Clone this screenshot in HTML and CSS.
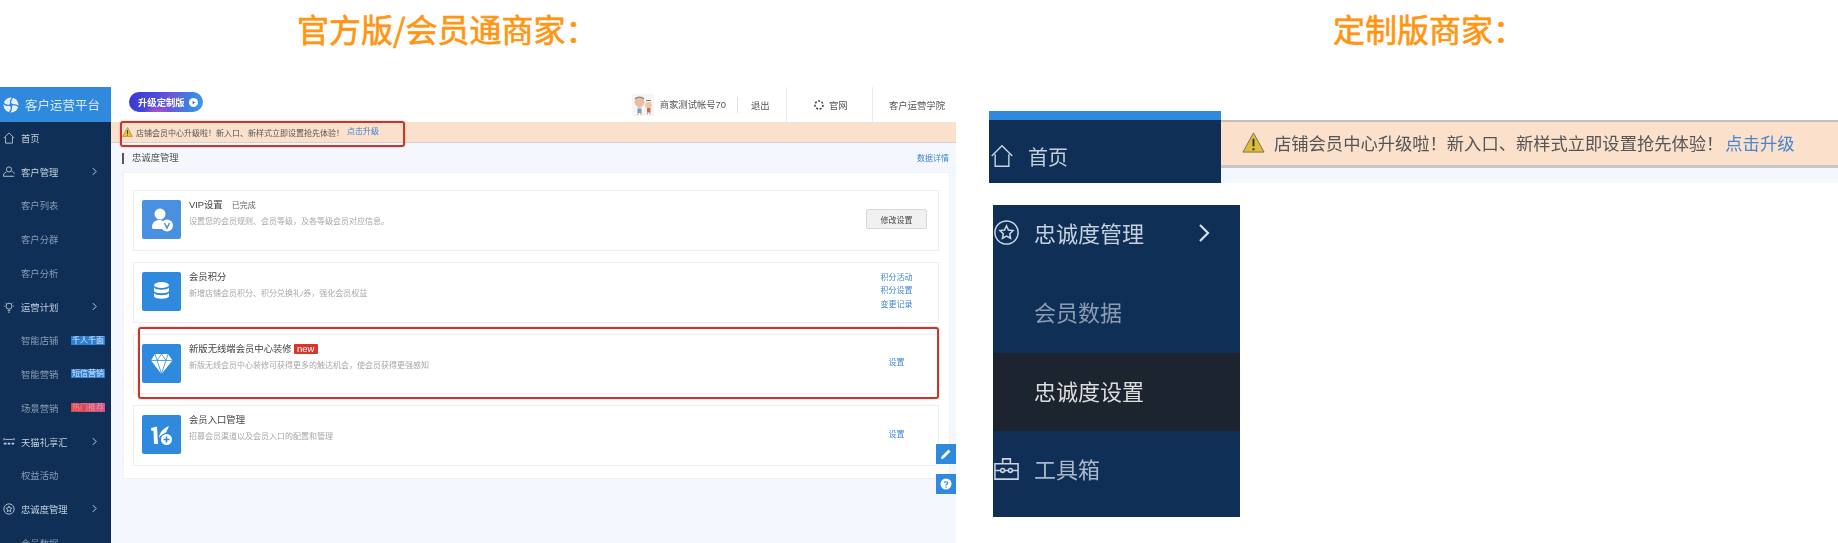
FILE: index.html
```html
<!DOCTYPE html>
<html lang="zh-CN">
<head>
<meta charset="utf-8">
<title>商家版本对比</title>
<link rel="stylesheet" href="styles.css">
</head>
<body>
<div class="page">
  <section class="col col-left">
    <h1 class="headline headline-left">官方版/会员通商家：</h1>
    <div class="shot">
      <aside class="side">
        <div class="brand">
          <svg class="brand-logo" viewBox="0 0 16 16"><circle cx="8" cy="8" r="7.500" fill="#e6eff9"/><g fill="none" stroke="#2f8ade" stroke-width="1.300"><path d="M8 8C7 5 7.500 2.500 10 0"/><path d="M8 8C11 7 13.500 7.500 16 10"/><path d="M8 8C9 11 8.500 13.500 6 16"/><path d="M8 8C5 9 2.500 8.500 0 6"/></g><circle cx="8" cy="8" r="1.800" fill="#2f8ade"/></svg>
          <span>客户运营平台</span>
        </div>
        <nav class="menu">
          <a class="row row-top"><svg class="ico" viewBox="0 0 14 14"><path d="M1 7l6-6 6 6M3 6v7h8V6"/></svg>首页</a>
          <a class="row row-top"><svg class="ico" viewBox="0 0 14 14"><circle cx="7" cy="4" r="3"/><path d="M4 7c-3 1-3.500 3-3.500 5h9M10 6c1 .5 3 1 3 3M9 12h4"/></svg>客户管理<svg class="chev" viewBox="0 0 6 10"><path d="M1 1l4 4-4 4"/></svg></a>
          <a class="row row-sub">客户列表</a>
          <a class="row row-sub">客户分群</a>
          <a class="row row-sub">客户分析</a>
          <a class="row row-top"><svg class="ico" viewBox="0 0 14 14"><circle cx="7" cy="6" r="3.500"/><path d="M5.500 11h3M6 13h2M1 6h1M12 6h1M2.500 2l1 1M11.500 2l-1 1"/></svg>运营计划<svg class="chev" viewBox="0 0 6 10"><path d="M1 1l4 4-4 4"/></svg></a>
          <a class="row row-sub">智能店铺<span class="tag tag-blue">千人千面</span></a>
          <a class="row row-sub">智能营销<span class="tag tag-blue">短信营销</span></a>
          <a class="row row-sub">场景营销<span class="tag tag-hot">热门推荐</span></a>
          <a class="row row-top"><svg class="ico" viewBox="0 0 14 14"><path d="M1 5V3l2 1h8l2-1v2" /><path class="thick" d="M1 9h3M5.500 9h3M10 9h3"/></svg>天猫礼享汇<svg class="chev" viewBox="0 0 6 10"><path d="M1 1l4 4-4 4"/></svg></a>
          <a class="row row-sub">权益活动</a>
          <a class="row row-top"><svg class="ico" viewBox="0 0 14 14"><circle cx="7" cy="7" r="6"/><path d="M7 3.500l1 2.200 2.400.3-1.700 1.600.4 2.400L7 8.900 4.900 10l.4-2.400L3.600 6l2.400-.3z"/></svg>忠诚度管理<svg class="chev" viewBox="0 0 6 10"><path d="M1 1l4 4-4 4"/></svg></a>
          <a class="row row-sub">会员数据</a>
        </nav>
      </aside>
      <div class="work">
        <header class="bar">
          <span class="upgrade">升级定制版<svg class="upgrade-ico" viewBox="0 0 10 10"><circle cx="5" cy="5" r="5" fill="#fff"/><path d="M4 3l3 2-3 2z" fill="#3c63d8"/></svg></span>
          <div class="bar-right">
            <svg class="avatar" viewBox="0 0 22 22"><rect width="22" height="22" fill="#f8f6f3"/><circle cx="7.500" cy="8" r="5" fill="#e6bfa6"/><path d="M3 5c2-2.500 7-2.500 9 0" fill="none" stroke="#8a8a80" stroke-width="1.300"/><rect x="5.500" y="13" width="4" height="3" fill="#e6bfa6"/><rect x="5.500" y="15" width="4" height="4" fill="#6a9fd0"/><path d="M6 19v2M9 19v2" stroke="#b9a48e"/><circle cx="16.500" cy="11" r="3.300" fill="#eec5aa"/><rect x="15" y="14" width="3.500" height="4.500" fill="#d8625a"/><path d="M14 6.500h5" stroke="#777"/><path d="M15.500 18.500v2M18 18.500v2" stroke="#b9a48e"/></svg>
            <span class="user">商家测试帐号70</span>
            <span class="logout">退出</span>
            <span class="site"><svg class="site-ico" viewBox="0 0 10 10"><circle cx="5" cy="5" r="4" fill="none" stroke="#444" stroke-width="1.600" stroke-dasharray="2 1.500"/></svg>官网</span>
            <span class="school">客户运营学院</span>
          </div>
        </header>
        <div class="notice">
          <svg class="warn" viewBox="0 0 12 11"><path d="M6 .5L11.500 10.500H.5z" fill="#ecc13c" stroke="#8a7a4a" stroke-width=".6"/><path d="M6 3.500v4M6 8.500v1" stroke="#333" stroke-width="1"/></svg>
          <span>店铺会员中心升级啦！新入口、新样式立即设置抢先体验！</span><a class="link notice-link">点击升级</a>
        </div>
        <div class="title-row">
          <h2 class="page-title">忠诚度管理</h2>
          <a class="link">数据详情</a>
        </div>
        <div class="panel">
          <article class="card">
            <span class="tile tile-vip"><svg class="glyph" viewBox="0 0 39 39"><circle cx="18" cy="14" r="5.500" fill="#fff"/><path d="M10 28c0-6 3-8 8-8 2 0 3 1 4 2-2 2-2 4-1 7H11z" fill="#fff"/><circle cx="25" cy="25.500" r="6" fill="#fff"/><path d="M22.500 23l2.500 5 2.500-5" fill="none" stroke="#4a90e0" stroke-width="1.500"/></svg></span>
            <div class="info">
              <h3 class="card-title">VIP设置<span class="done">已完成</span></h3>
              <p class="desc">设置您的会员规则、会员等级，及各等级会员对应信息。</p>
            </div>
            <div class="action"><button class="btn">修改设置</button></div>
          </article>
          <article class="card">
            <span class="tile"><svg class="glyph" viewBox="0 0 39 39"><g fill="#fff"><ellipse cx="19.500" cy="13" rx="7.500" ry="3"/><path d="M12 15.500c1.500 3 13.500 3 15 0v3.500c-1.500 3-13.500 3-15 0z"/><path d="M12 21c1.500 3 13.500 3 15 0v3.500c-1.500 3-13.500 3-15 0z"/></g></svg></span>
            <div class="info">
              <h3 class="card-title">会员积分</h3>
              <p class="desc">新增店铺会员积分、积分兑换礼/券，强化会员权益</p>
            </div>
            <div class="action action-links"><a class="link">积分活动</a><a class="link">积分设置</a><a class="link">变更记录</a></div>
          </article>
          <article class="card">
            <span class="tile"><svg class="glyph" viewBox="0 0 39 39"><path d="M13 10h13l4.500 6.500L19.500 30 9 16.500z" fill="#fff"/><path d="M9 16.500h21.500M15 16.500l4.500 13 4.500-13M13 10l2 6.500M26 10l-2 6.500M19.500 10l-4.500 6.500M19.500 10l4.500 6.500" stroke="#2f8ade" stroke-width=".8" fill="none"/></svg></span>
            <div class="info">
              <h3 class="card-title">新版无线端会员中心装修<span class="new">new</span></h3>
              <p class="desc">新版无线会员中心装修可获得更多的触达机会，使会员获得更强感知</p>
            </div>
            <div class="action"><a class="link">设置</a></div>
          </article>
          <article class="card">
            <span class="tile"><svg class="glyph" viewBox="0 0 39 39"><path d="M9 13l6-1.500 1 17.500h-4l-.5-13.500-2 .5zM17 23c.5-6 5-10 10-12l-3 6.500c-3 1-5.500 3-7 5.500z" fill="#fff"/><circle cx="24.500" cy="24.500" r="5.500" fill="#fff"/><path d="M21.500 24.500h6M24.500 21.500v6" stroke="#2f8ade" stroke-width="1.500"/></svg></span>
            <div class="info">
              <h3 class="card-title">会员入口管理</h3>
              <p class="desc">招募会员渠道以及会员入口的配置和管理</p>
            </div>
            <div class="action"><a class="link">设置</a></div>
          </article>
        </div>
      </div>
      <span class="mark mark-notice"></span>
      <span class="mark mark-card"></span>
      <a class="float float-edit"><svg viewBox="0 0 12 12"><path d="M1 11l.6-2.600L8.500 1.500l2 2L3.600 10.400z" fill="#fff"/></svg></a>
      <a class="float float-help"><svg viewBox="0 0 12 12"><circle cx="6" cy="6" r="5.500" fill="#fff"/><path d="M4.300 4.700C4.400 3.500 7.700 3.300 7.700 5c0 1.300-1.700 1.200-1.700 2.500M6 8.500v1.200" fill="none" stroke="#2f8ade" stroke-width="1.200"/></svg></a>
    </div>
  </section>
  <section class="col col-right">
    <h1 class="headline headline-right">定制版商家：</h1>
    <div class="crop-top">
      <div class="crop-side">
        <div class="crop-blue"></div>
        <a class="crop-home"><svg class="crop-ico" viewBox="0 0 14 14"><path d="M1 7l6-6 6 6M3 6v7h8V6"/></svg>首页</a>
      </div>
      <div class="crop-main">
        <div class="crop-notice">
          <svg class="crop-warn" viewBox="0 0 12 11"><path d="M6 .5L11.500 10.500H.5z" fill="#e3bb3a" stroke="#77705c" stroke-width=".5"/><path d="M6 3.500v4M6 8.500v1" stroke="#333" stroke-width="1"/></svg>
          <span>店铺会员中心升级啦！新入口、新样式立即设置抢先体验！</span><a class="crop-link">点击升级</a>
        </div>
      </div>
    </div>
    <nav class="crop-menu">
      <a class="crop-row crop-parent"><svg class="crop-ico" viewBox="0 0 14 14"><circle cx="7" cy="7" r="6"/><path d="M7 3.500l1 2.200 2.400.3-1.700 1.600.4 2.400L7 8.900 4.900 10l.4-2.400L3.600 6l2.400-.3z"/></svg>忠诚度管理<svg class="crop-chev" viewBox="0 0 6 10"><path d="M1 1l4 4-4 4"/></svg></a>
      <a class="crop-row crop-child">会员数据</a>
      <a class="crop-row crop-active">忠诚度设置</a>
      <a class="crop-row crop-tool"><svg class="crop-ico" viewBox="0 0 14 14"><path d="M1 4.500h12v8H1zM5 4.500V2h4v2.500M1 8h3M10 8h3M6 8h2"/><circle cx="5" cy="8" r="1"/><circle cx="9" cy="8" r="1"/></svg>工具箱</a>
    </nav>
  </section>
</div>
</body>
</html>
```

FILE: styles.css
```css
* { box-sizing: border-box; }
html, body { margin: 0; padding: 0; background: #fff; }
body { font-family: "Liberation Sans", "Noto Sans CJK SC", sans-serif; }
a { display: block; }
h1, h2, h3, p { margin: 0; font-weight: normal; }

.page { display: flex; width: 1838px; height: 543px; overflow: hidden; }
.col-left { width: 956px; flex: none; }
.col-right { flex: 1; }

.headline { height: 87px; padding-top: 8px; color: #ff9510; font-family: "Noto Sans CJK SC", sans-serif; font-size: 32px; line-height: 40px; font-weight: 400; -webkit-text-stroke: .6px #ff9510; }
.headline-left { padding-left: 297px; }
.headline-right { padding-left: 377px; }

/* left screenshot */
.shot { position: relative; display: flex; height: 456px; overflow: hidden; filter: blur(.35px); }
.side { width: 111px; flex: none; background: #0f2f57; }
.brand { display: flex; align-items: center; height: 35px; padding-left: 3px; gap: 6px; background: #2f8ade; color: #dbe8f6; font-size: 12.500px; }
.brand-logo { width: 16px; height: 16px; }
.row { position: relative; display: flex; align-items: center; height: 33.750px; padding: 0 0 2px 21px; font-size: 9.330px; white-space: nowrap; }
.row-top { color: #c5d0dc; }
.row-sub { color: #8c9db3; }
.ico { position: absolute; left: 3px; top: 10px; width: 12px; height: 12px; fill: none; stroke: #c5d0dc; stroke-width: 1; }
.ico .thick { stroke-width: 2; }
.chev { position: absolute; left: 92px; top: 11px; width: 5px; height: 9px; fill: none; stroke: #c5d0dc; stroke-width: 1.200; }
.tag { position: absolute; left: 71px; top: 11px; width: 34px; height: 9px; color: #dbe8f6; font-size: 8px; line-height: 9px; text-align: center; }
.tag-blue { background: #2f7fd0; }
.tag-hot { background: linear-gradient(90deg, #d8453e, #d2508f); color: #e89aa0; }

.work { flex: 1; min-width: 0; display: flex; flex-direction: column; background: #f4f8fe; }
.bar { display: flex; align-items: stretch; justify-content: space-between; height: 35px; padding: 5px 0 0 18px; background: #fff; }
.upgrade { display: flex; align-items: center; gap: 4px; align-self: flex-start; width: 74px; height: 20px; padding-left: 9px; border-radius: 10px; background: radial-gradient(ellipse 14px 6px at 38% 100%, #c94fc0 0, rgba(201, 79, 192, 0) 100%), linear-gradient(100deg, #3a37d0 0%, #4a4de0 35%, #6f55d8 55%, #3f7fe0 80%, #3aa0e8 100%); color: #fff; font-size: 9.330px; font-weight: bold; white-space: nowrap; }
.upgrade-ico { width: 9px; height: 9px; flex: none; }
.bar-right { display: flex; align-items: center; margin-top: -5px; color: #555; font-size: 9.330px; white-space: nowrap; }
.avatar { width: 22px; height: 22px; margin-right: 6px; }
.user { padding-right: 11px; border-right: 1px solid #e3e3e3; line-height: 16px; }
.logout { width: 48px; padding-left: 13px; }
.site { display: flex; align-items: center; gap: 5px; align-self: stretch; width: 87px; padding-left: 27px; border-left: 1px solid #e8ecf0; border-right: 1px solid #e8ecf0; }
.site-ico { width: 10px; height: 10px; }
.school { width: 83px; padding-left: 16px; }

.notice { display: flex; align-items: center; height: 21px; padding-left: 11px; background: #fbe0cc; border-bottom: 1px solid #d5d0cb; color: #555; font-size: 8px; white-space: nowrap; }
.warn { width: 11px; height: 10px; margin-right: 3px; }
.notice-link { margin-left: 3px; }
.link { color: #3d86d4; font-size: 8px; line-height: 13.500px; white-space: nowrap; }

.title-row { display: flex; align-items: center; justify-content: space-between; height: 29px; padding: 2px 7px 0 11px; }
.page-title { height: 11px; padding-left: 8px; border-left: 2px solid #555; color: #555; font-size: 9.330px; line-height: 11px; }

.panel { display: flex; flex-direction: column; gap: 11px; height: 307px; margin: 0 6px 0 12px; padding: 17px 10px 0 9px; background: #fff; border: 1px solid #eef2f7; }
.card { display: flex; align-items: flex-start; height: 60.750px; padding: 9px 0 0 8px; background: #fff; border: 1px solid #eeeeee; flex: none; }
.tile { display: block; width: 39px; height: 39px; flex: none; border-radius: 2px; background: #2f8ade; }
.tile-vip { background: #4a90e0; }
.glyph { display: block; width: 39px; height: 39px; }
.info { flex: 1; min-width: 0; margin-top: -1px; padding-left: 8px; }
.card-title { display: flex; align-items: center; height: 13px; color: #444; font-size: 9.330px; line-height: 13px; white-space: nowrap; }
.done { margin-left: 9px; color: #666; font-size: 8px; }
.new { width: 24px; height: 10px; margin-left: 2px; border-radius: 1px; background: #d9352a; color: #fff; font-size: 9.500px; line-height: 10px; text-align: center; }
.desc { margin-top: 4px; color: #a8a8a8; font-size: 8px; line-height: 11px; white-space: nowrap; }
.action { display: flex; flex-direction: column; align-items: center; justify-content: center; align-self: center; width: 61px; margin: -11px 11px 0 0; }
.action-links { line-height: 13.500px; }
.btn { width: 61px; height: 20px; padding: 0; border: 1px solid #d8d8d8; border-radius: 2px; background: #f1f1f1; color: #444; font-family: inherit; font-size: 8px; }

.mark { position: absolute; border: 2px solid #c8352b; border-radius: 3px; box-shadow: 0 0 2px rgba(120, 60, 50, .4); pointer-events: none; }
.mark-notice { left: 120px; top: 34px; width: 285px; height: 26px; }
.mark-card { left: 138px; top: 240px; width: 801px; height: 72px; }
.float { position: absolute; left: 936px; width: 20px; height: 20px; padding: 4px; background: #2f8ade; }
.float svg { display: block; width: 12px; height: 12px; }
.float-edit { top: 357px; }
.float-help { top: 387px; }

/* right crops */
.crop-top { display: flex; height: 72px; margin: 24px 0 0 33px; filter: blur(.5px); }
.crop-side { width: 232px; flex: none; background: #0f2f57; }
.crop-blue { height: 9px; background: #2f8ade; }
.crop-home { position: relative; display: flex; align-items: center; height: 63px; padding: 9px 0 0 39px; color: #c5d0dc; font-size: 20px; }
.crop-ico { position: absolute; left: 0; top: 50%; width: 27px; height: 27px; margin-top: -15px; fill: none; stroke: #c8d4e2; stroke-width: .8; }
.crop-home .crop-ico { top: 24px; left: 1px; width: 24px; height: 24px; margin-top: 0; }
.crop-main { flex: 1; min-width: 0; padding-top: 9px; background: #fff; }
.crop-notice { display: flex; align-items: center; height: 48px; padding: 0 0 2px 21px; background: #fbe0cc; border-top: 2px solid #c8bdb3; border-bottom: 3px solid #c9c5c2; color: #555; font-size: 17.300px; white-space: nowrap; }
.crop-main::after { content: ""; display: block; height: 15px; background: #f4f8fe; }
.crop-warn { width: 23px; height: 23px; margin-right: 9px; flex: none; }
.crop-link { margin-left: 2px; color: #4a86cc; }

.crop-menu { width: 247px; height: 312px; margin: 22px 0 0 37px; background: #0f2f57; filter: blur(.5px); }
.crop-row { position: relative; display: flex; align-items: center; height: 78px; padding: 0 0 4px 41px; font-size: 22px; white-space: nowrap; }
.crop-parent { height: 58px; color: #c5d0dc; }
.crop-child { height: 90px; padding-top: 6px; padding-bottom: 0; color: #8c9db3; }
.crop-active { background: #1c2430; color: #ddd; }
.crop-tool { color: #a9b8ca; }
.crop-chev { position: absolute; left: 205px; top: 18px; width: 12px; height: 20px; fill: none; stroke: #d8e0e8; stroke-width: 1.100; }
```
